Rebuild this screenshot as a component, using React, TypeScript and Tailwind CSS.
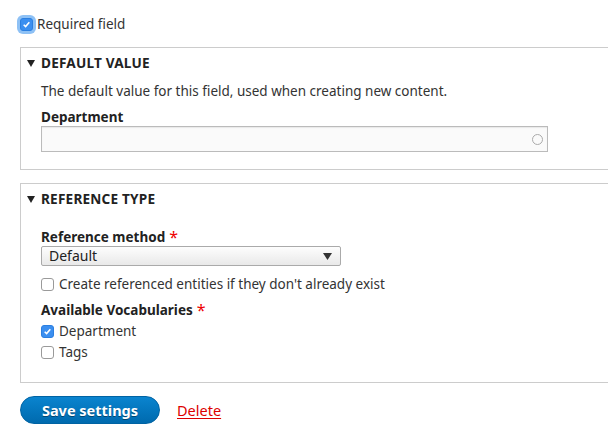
import React from "react";

function Check({ checked, focus }: { checked?: boolean; focus?: boolean }) {
  return (
    <span
      className={`relative inline-flex h-[13px] w-[13px] shrink-0 items-center justify-center rounded-[3px] border ${
        checked ? "border-[#2b7fe0] bg-[#3b8ff0]" : "border-[#9a9a9a] bg-white"
      } ${focus ? "shadow-[0_0_0_3px_#8ec1f5]" : ""}`}
    >
      {checked && (
        <svg width="9" height="9" viewBox="0 0 8 8">
          <path d="M1.5 4.2 L3.2 5.8 L6.5 2" stroke="white" strokeWidth="1.4" fill="none" />
        </svg>
      )}
    </span>
  );
}

function Legend({ children }: { children: React.ReactNode }) {
  return (
    <div className="flex h-[18px] items-center gap-[6px] pl-[6px] text-[13.6px] font-bold tracking-[0.2px] text-[#222]">
      <svg width="8" height="7" viewBox="0 0 8 7" className="shrink-0">
        <path d="M0 0 H8 L4 7 Z" fill="#222" />
      </svg>
      {children}
    </div>
  );
}

function Star() {
  return <span className="ml-[4px] text-[16px] font-normal leading-none text-[#e00]">*</span>;
}

export default function App() {
  return (
    <div className="h-[435px] w-[608px] overflow-hidden bg-white pl-[20px] font-['Noto_Sans',sans-serif] text-[13.5px] leading-[18px] text-[#333]">
      <label className="flex h-[47px] items-center gap-[4px] pt-[1px]">
        <Check checked focus />
        <span>Required field</span>
      </label>

      <div className="mr-[-10px] h-[123px] border border-[#ccc] pt-[6px]">
        <Legend>DEFAULT VALUE</Legend>
        <div className="pl-[20px]">
          <p className="mt-[10px]">The default value for this field, used when creating new content.</p>
          <div className="mt-[8px] font-bold text-[#222]">Department</div>
          <div className="flex h-[26px] w-[507px] items-center justify-end border border-[#bbb] bg-[#fafafa] pr-[4px] shadow-[inset_0_1px_1px_#e8e8e8]">
            <span className="h-[11px] w-[11px] rounded-full border-[1.5px] border-[#aaa]" />
          </div>
        </div>
      </div>

      <div className="mr-[-10px] mt-[13px] h-[200px] border border-[#ccc] pt-[6px]">
        <Legend>REFERENCE TYPE</Legend>
        <div className="pl-[20px]">
          <div className="mt-[20px] flex items-center font-bold text-[#222]">
            Reference method
            <Star />
          </div>
          <div className="flex h-[20px] w-[300px] items-center justify-between rounded-[2px] border border-[#aaa] bg-gradient-to-b from-[#fdfdfd] to-[#e9e9e9] pl-[7px] pr-[8px] text-[14px] text-[#222]">
            <span>Default</span>
            <svg width="9" height="7" viewBox="0 0 9 7">
              <path d="M0 0 H9 L4.5 7 Z" fill="#333" />
            </svg>
          </div>
          <label className="mt-[9px] flex items-center gap-[5px]">
            <Check />
            <span>Create referenced entities if they don't already exist</span>
          </label>
          <div className="mt-[8px] flex items-center font-bold text-[#222]">
            Available Vocabularies
            <Star />
          </div>
          <label className="mt-[3px] flex items-center gap-[5px]">
            <Check checked />
            <span>Department</span>
          </label>
          <label className="mt-[3px] flex items-center gap-[5px]">
            <Check />
            <span>Tags</span>
          </label>
        </div>
      </div>

      <div className="mt-[13px] flex items-center gap-[17px]">
        <button className="h-[28px] w-[140px] rounded-full border border-[#0063a3] bg-gradient-to-b from-[#0a84cf] to-[#006aae] text-[14.5px] font-bold text-white [text-shadow:0_1px_0_rgba(0,0,0,0.4)]">
          Save settings
        </button>
        <a className="text-[14.5px] text-[#d00] underline underline-offset-[2px]">Delete</a>
      </div>
    </div>
  );
}
